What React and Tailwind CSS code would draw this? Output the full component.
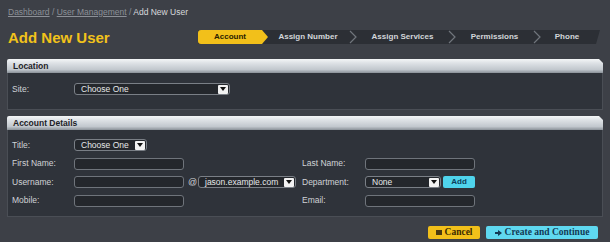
import React from "react";

const F = { fontFamily: '"Liberation Sans", Arial, sans-serif' };

function Arrow() {
  return (
    <span className="flex h-[9px] w-[10px] items-center justify-center rounded-[1px] bg-[#f2f2f2]">
      <svg width="6" height="4" viewBox="0 0 6 4">
        <polygon points="0,0 6,0 3,4" fill="#111" />
      </svg>
    </span>
  );
}

function Select({ w, text }) {
  return (
    <div
      className={`flex h-[12px] items-center justify-between rounded-[3px] border border-[#7a7f86] bg-[#24272c] pl-[6px] pr-[1px] text-[8.5px] text-[#e6e8ea] ${w}`}
    >
      <span className="leading-none">{text}</span>
      <Arrow />
    </div>
  );
}

function Input({ w = "w-[110px]" }) {
  return <div className={`h-[12px] rounded-[3px] border border-[#6f747b] bg-[#24272c] ${w}`} />;
}

function Label({ children, w = "w-[62px]" }) {
  return <span className={`${w} text-[8.5px] leading-none text-[#cfd2d6]`}>{children}</span>;
}

function Header({ children }) {
  return (
    <div className="flex h-[14px] items-center rounded-t-[2px] bg-[linear-gradient(to_bottom,#f4f6f7_0%,#dde1e5_30%,#c2c8ce_75%,#8a9198_100%)] pl-[6px] [clip-path:polygon(0_0,calc(100%-4px)_0,100%_4px,100%_100%,0_100%)]">
      <span className="text-[8.5px] font-bold leading-none text-[#1d2227]">{children}</span>
    </div>
  );
}

function Chevron() {
  return (
    <svg width="10" height="14" viewBox="0 0 10 14" className="shrink-0">
      <polyline points="2,1 8,7 2,13" fill="none" stroke="#70757c" strokeWidth="1.2" />
    </svg>
  );
}

export default function App() {
  return (
    <div style={F} className="flex h-[246px] w-[610px] flex-col overflow-hidden bg-white">
      <div className="flex h-[242px] flex-col bg-[#3d4047]">
        {/* breadcrumb */}
        <div className="h-[9px] pl-[8px] mt-[8px] text-[8.5px] leading-[9px] text-[#8c9097]">
          <span className="underline">Dashboard</span> / <span className="underline">User Management</span> /{" "}
          <span className="text-[#d8dadd]">Add New User</span>
        </div>

        {/* title + steps */}
        <div className="mt-[12px] flex h-[16px] items-center justify-between pl-[8px] pr-[10px]">
          <h1 className="text-[15px] font-bold leading-none text-[#f1c21b]">Add New User</h1>
          <div className="flex h-[14px] w-[402px] items-center bg-[#2c2f35] text-[8px] font-bold text-[#d3d6da] [clip-path:polygon(0_0,100%_0,calc(100%-4px)_100%,0_100%)]">
            <div className="flex h-[14px] w-[70px] items-center justify-center rounded-l-[3px] bg-[#f2c01a] pr-[6px] text-[#2a2100] [clip-path:polygon(0_0,calc(100%-6px)_0,100%_50%,calc(100%-6px)_100%,0_100%)]">
              Account
            </div>
            <div className="w-[80px] text-center">Assign Number</div>
            <Chevron />
            <div className="w-[89px] text-center">Assign Services</div>
            <Chevron />
            <div className="w-[75px] text-center">Permissions</div>
            <Chevron />
            <div className="w-[58px] pr-[8px] text-center">Phone</div>
          </div>
        </div>

        {/* Location panel */}
        <div className="ml-[7px] mt-[14px] w-[596px]">
          <Header>Location</Header>
          <div className="h-[37px] border border-t-0 border-[#4a4e55] bg-[#2f333a] pl-[4px] pt-[10px]">
            <div className="flex items-center">
              <Label>Site:</Label>
              <Select w="w-[156px]" text="Choose One" />
            </div>
          </div>
        </div>

        {/* Account details panel */}
        <div className="ml-[7px] mt-[6px] w-[596px]">
          <Header>Account Details</Header>
          <div className="flex h-[87px] flex-col gap-[6.5px] border border-t-0 border-[#4a4e55] bg-[#2f333a] pl-[4px] pt-[9px]">
            <div className="flex items-center">
              <Label>Title:</Label>
              <Select w="w-[73px]" text="Choose One" />
            </div>
            <div className="flex items-center">
              <div className="flex w-[290px] items-center">
                <Label>First Name:</Label>
                <Input />
              </div>
              <Label w="w-[63px]">Last Name:</Label>
              <Input />
            </div>
            <div className="flex items-center">
              <div className="flex w-[290px] items-center">
                <Label>Username:</Label>
                <Input />
                <span className="ml-[4px] w-[10px] text-[9px] leading-none text-[#cfd2d6]">@</span>
                <Select w="w-[98px]" text="jason.example.com" />
              </div>
              <Label w="w-[63px]">Department:</Label>
              <Select w="w-[76px]" text="None" />
              <div className="ml-[2px] flex h-[12px] w-[32px] items-center justify-center rounded-[2px] bg-[#4fd4ec] text-[8px] font-bold text-[#0d3f5a]">
                Add
              </div>
            </div>
            <div className="flex items-center">
              <div className="flex w-[290px] items-center">
                <Label>Mobile:</Label>
                <Input />
              </div>
              <Label w="w-[63px]">Email:</Label>
              <Input />
            </div>
          </div>
        </div>

        {/* buttons */}
        <div
          className="mt-[9px] flex justify-end gap-[6px] pr-[12px] text-[9.5px] font-bold"
          style={{ fontFamily: '"Liberation Serif", "Times New Roman", serif' }}
        >
          <div className="flex h-[13px] w-[52px] items-center justify-center gap-[3px] rounded-[2px] bg-[#f2c01a] text-[#3a2a00]">
            <span className="inline-block h-[5px] w-[6px] bg-[#4a3a10]" />
            Cancel
          </div>
          <div className="flex h-[13px] w-[112px] items-center justify-center gap-[3px] rounded-[2px] bg-[#5fd8f0] text-[#123a55]">
            <svg width="7" height="6" viewBox="0 0 7 6">
              <polygon points="0,2 3,2 3,0 7,3 3,6 3,4 0,4" fill="#123a55" />
            </svg>
            Create and Continue
          </div>
        </div>
      </div>
    </div>
  );
}
